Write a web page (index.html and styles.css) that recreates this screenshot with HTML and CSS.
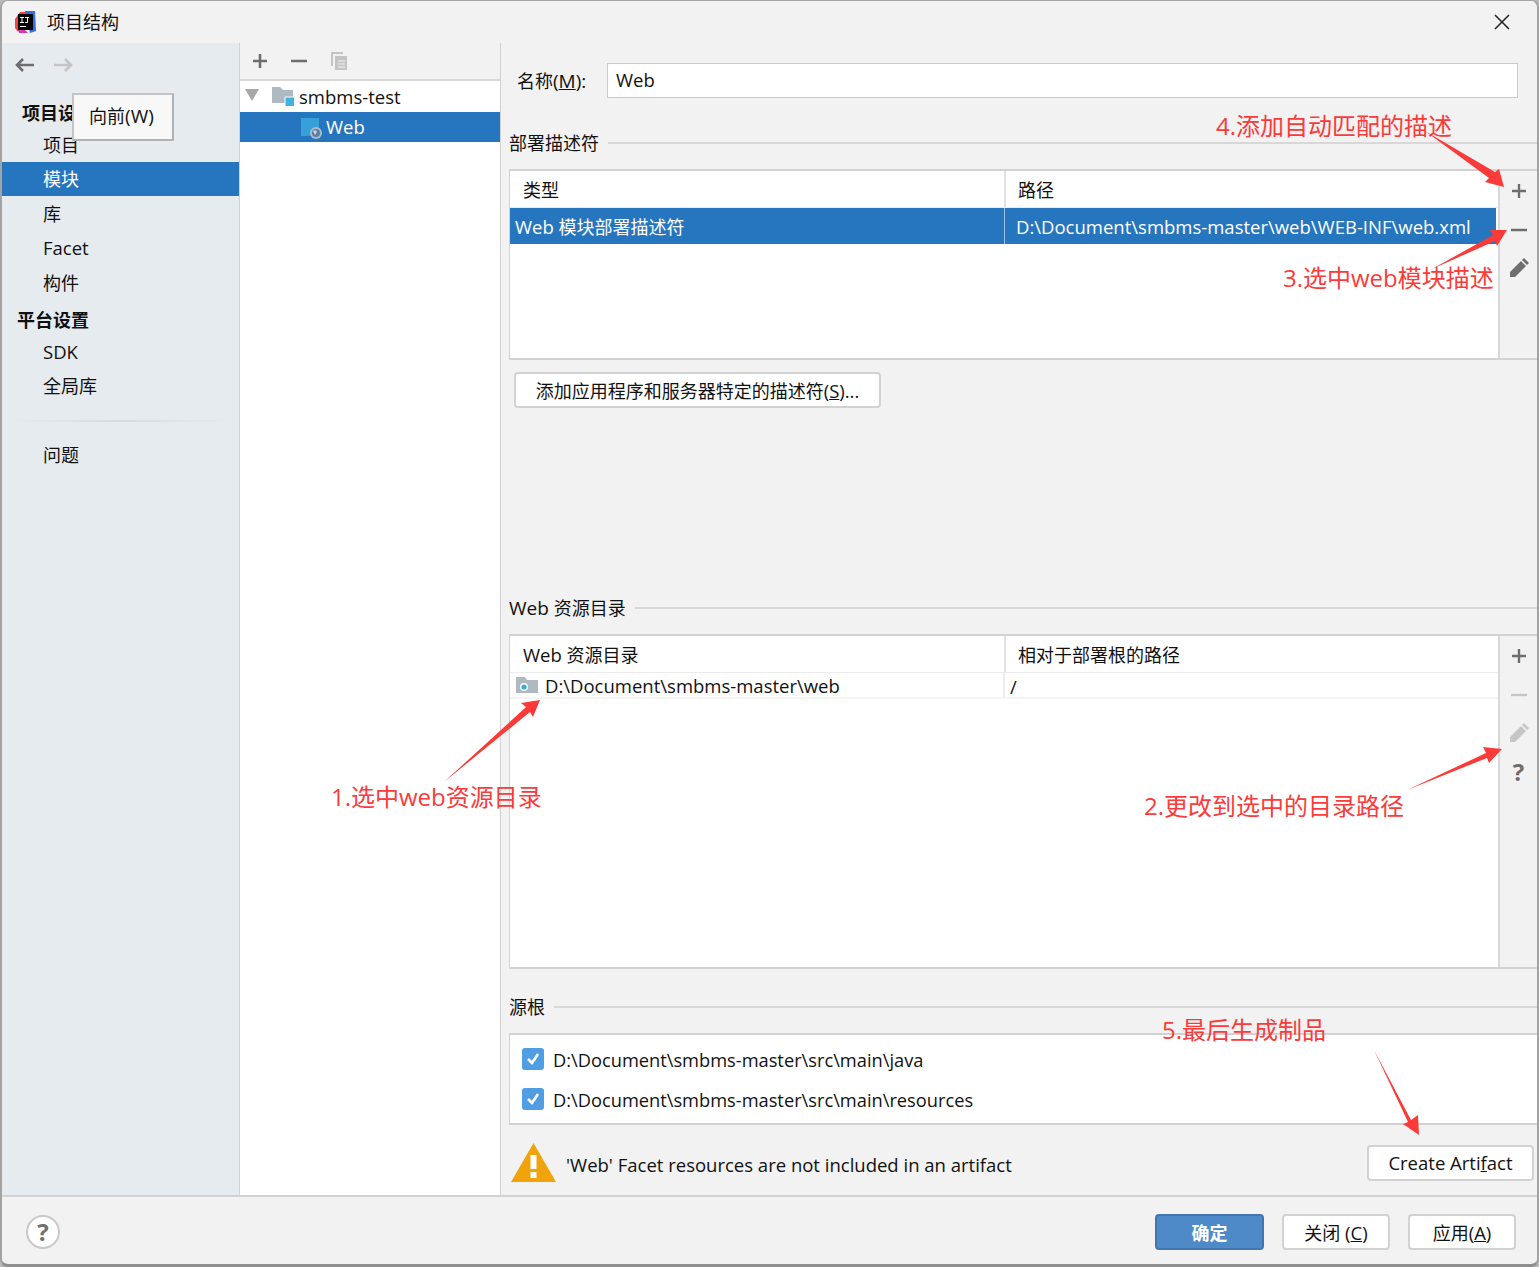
FILE: index.html
```html
<!DOCTYPE html>
<html lang="zh">
<head>
<meta charset="utf-8">
<title>项目结构</title>
<link rel="stylesheet" href="styles.css">
</head>
<body>
<div class="window">
  <header class="titlebar">
    <svg class="applogo" viewBox="0 0 24 24" width="24" height="24">
      <path d="M2 9 7 2h6l1 6-9 14-3-4z" fill="#f9413b"/>
      <path d="M12 1h10l1 20-6 2z" fill="#2f6fe8"/>
      <path d="M4 12l2 11h9z" fill="#d437b0"/>
      <rect x="5" y="4" width="15" height="16" fill="#000"/>
      <path d="M7 7h4v1H9.5v4H11v1H7v-1h1.5V8H7zM12 7h4v1h-1v4q0 1-1 1h-2v-1h2V8h-2z" fill="#fff"/>
      <rect x="7" y="16" width="6" height="1" fill="#fff"/>
    </svg>
    <span class="title">项目结构</span>
    <svg class="close" viewBox="0 0 16 16" width="16" height="16"><path d="M1 1l14 14M15 1 1 15" stroke="#222" stroke-width="1.5" fill="none"/></svg>
  </header>

  <div class="main">
    <nav class="sidebar">
      <div class="navarrows">
        <svg viewBox="0 0 20 16" width="20" height="16"><path d="M20 8H3M9 2 3 8l6 6" stroke="#6e6e6e" stroke-width="2.6" fill="none"/></svg>
        <svg viewBox="0 0 20 16" width="20" height="16"><path d="M0 8h17M11 2l6 6-6 6" stroke="#c4c4c4" stroke-width="2.6" fill="none"/></svg>
      </div>
      <div class="navhead first">项目设置</div>
      <div class="navitem">项目</div>
      <div class="navitem active">模块</div>
      <div class="navitem i3">库</div>
      <div class="navitem lat">Facet</div>
      <div class="navitem i5">构件</div>
      <div class="navhead second">平台设置</div>
      <div class="navitem lat">SDK</div>
      <div class="navitem">全局库</div>
      <div class="navsep"></div>
      <div class="navitem">问题</div>
    </nav>

    <section class="treepane">
      <div class="treetools">
        <svg viewBox="0 0 16 16" width="16" height="16"><path d="M8 1v14M1 8h14" stroke="#6e6e6e" stroke-width="2.6" fill="none"/></svg>
        <svg viewBox="0 0 16 16" width="16" height="16"><path d="M0 8h16" stroke="#6e6e6e" stroke-width="2.6" fill="none"/></svg>
        <svg viewBox="0 0 18 20" width="18" height="20"><path d="M1 1h12v2H3v12H1z" fill="#c4c4c4"/><path d="M5 5h12v14H5z" fill="#c4c4c4"/><path d="M8 10h7M8 13h7M8 16h7" stroke="#f2f2f2" stroke-width="1"/></svg>
      </div>
      <div class="tree">
        <div class="treerow first">
          <svg class="caret" viewBox="0 0 14 12" width="14" height="12"><path d="M0 0h14L7 12z" fill="#a8a8a8"/></svg>
          <svg class="foldericon" viewBox="0 0 22 22" width="22" height="22"><path d="M0 1h8l3 3h10v13H0z" fill="#afb9c2"/><rect x="13" y="11" width="9" height="9" fill="#3fb4e3"/><path d="M13 11h9M13 11v9" stroke="#fff"/></svg>
          <span class="lat">smbms-test</span>
        </div>
        <div class="treerow sel">
          <svg class="webicon" viewBox="0 0 24 22" width="24" height="22"><rect x="0" y="1" width="18" height="18" fill="#38a0d8"/><circle cx="15" cy="16" r="6" fill="#a9bccc"/><circle cx="15" cy="16" r="4" fill="#5b7da0"/><path d="M12 14q3-2 4 1l-2 3z" fill="#c9d6e0"/></svg>
          <span class="lat">Web</span>
        </div>
      </div>
    </section>

    <section class="detail">
      <div class="namerow">
        <label class="namelabel">名称<span class="latwide">(<u>M</u>):</span></label>
        <div class="nameinput lat">Web</div>
      </div>

      <div class="sectionhead s1"><span>部署描述符</span><i></i></div>
      <div class="tablebox tb1">
        <div class="tablemain">
          <div class="thead"><div class="c1">类型</div><div class="c2">路径</div></div>
          <div class="trow selrow"><div class="c1"><span class="lat">Web </span>模块部署描述符</div><div class="c2 lat">D:\Document\smbms-master\web\WEB-INF\web.xml</div></div>
        </div>
        <div class="sidetools">
          <svg viewBox="0 0 16 16" width="16" height="16"><path d="M8 1v14M1 8h14" stroke="#6e6e6e" stroke-width="2.4" fill="none"/></svg>
          <svg viewBox="0 0 16 16" width="16" height="16"><path d="M0 8h16" stroke="#6e6e6e" stroke-width="2.4" fill="none"/></svg>
          <svg viewBox="0 0 20 20" width="20" height="20"><path d="M1 19v-5L12 3l5 5L6 19zM13 2l2-2 5 5-2 2z" fill="#6e6e6e"/></svg>
        </div>
      </div>
      <button class="btn addbtn">添加应用程序和服务器特定的描述符<span class="lat">(<u>S</u>)...</span></button>

      <div class="sectionhead s2"><span><span class="latwide">Web </span>资源目录</span><i></i></div>
      <div class="tablebox tb2">
        <div class="tablemain">
          <div class="thead"><div class="c1"><span class="lat">Web </span>资源目录</div><div class="c2">相对于部署根的路径</div></div>
          <div class="trow plainrow">
            <div class="c1"><svg viewBox="0 0 22 16" width="22" height="16"><path d="M0 0h9l2 3h11v13H0z" fill="#afb9c2"/><circle cx="8" cy="10" r="4" fill="#fff"/><circle cx="8" cy="10" r="2.6" fill="#38a8e0"/></svg><span class="lat">D:\Document\smbms-master\web</span></div>
            <div class="c2 lat">/</div>
          </div>
        </div>
        <div class="sidetools">
          <svg viewBox="0 0 16 16" width="16" height="16"><path d="M8 1v14M1 8h14" stroke="#6e6e6e" stroke-width="2.4" fill="none"/></svg>
          <svg viewBox="0 0 16 16" width="16" height="16"><path d="M0 8h16" stroke="#c6c6c6" stroke-width="2.4" fill="none"/></svg>
          <svg viewBox="0 0 20 20" width="20" height="20"><path d="M1 19v-5L12 3l5 5L6 19zM13 2l2-2 5 5-2 2z" fill="#c6c6c6"/></svg>
          <span class="qmark">?</span>
        </div>
      </div>

      <div class="sectionhead s3"><span>源根</span><i></i></div>
      <div class="rootbox">
        <div class="check"><svg viewBox="0 0 22 22" width="22" height="22"><rect width="22" height="22" rx="3" fill="#4f9ee3"/><path d="M6 11l4 4 6-9" stroke="#fff" stroke-width="2.6" fill="none"/></svg><span>D:\Document\smbms-master\src\main\java</span></div>
        <div class="check"><svg viewBox="0 0 22 22" width="22" height="22"><rect width="22" height="22" rx="3" fill="#4f9ee3"/><path d="M6 11l4 4 6-9" stroke="#fff" stroke-width="2.6" fill="none"/></svg><span>D:\Document\smbms-master\src\main\resources</span></div>
      </div>
      <div class="warnrow">
        <svg viewBox="0 0 45 40" width="45" height="40"><path d="M22.5 0 45 39H0z" fill="#f0a30a"/><rect x="19.500" y="12" width="6" height="14" fill="#fff"/><rect x="19.500" y="29" width="6" height="6" fill="#fff"/></svg>
        <span class="warntext lat">'Web' Facet resources are not included in an artifact</span>
        <button class="btn artifact lat">Create Arti<u>f</u>act</button>
      </div>
    </section>
  </div>

  <footer class="footer">
    <span class="help">?</span>
    <div class="footbtns">
      <button class="btn primary">确定</button>
      <button class="btn foot">关闭 <span class="lat">(<u>C</u>)</span></button>
      <button class="btn foot">应用<span class="lat">(<u>A</u>)</span></button>
    </div>
  </footer>

  <div class="tooltip">向前<span class="latwide">(W)</span></div>
</div>

<svg class="arrows" viewBox="0 0 1539 1267" width="1539" height="1267">
  <g fill="#fb3a3a">
    <path d="M1425 131 1495 172 1499 169 1504 187 1485 182 1489 178z"/>
    <path d="M1432 269 1493 235 1490 230 1507 230 1497 246 1495 241z"/>
    <path d="M444 782 526 707 521 703 540 700 533 717 530 712z"/>
    <path d="M1407 790 1486 753 1483 747 1502 749 1489 763 1487 758z"/>
    <path d="M1374 1050 1411 1120 1418 1115 1419 1135 1403 1124 1408 1122z"/>
  </g>
</svg>
<span class="note n4">4.添加自动匹配的描述</span>
<span class="note n3">3.选中web模块描述</span>
<span class="note n1">1.选中web资源目录</span>
<span class="note n2">2.更改到选中的目录路径</span>
<span class="note n5">5.最后生成制品</span>
</body>
</html>
```

FILE: styles.css
```css
* { box-sizing: border-box; }
html, body { margin: 0; padding: 0; }
body {
  width: 1539px;
  height: 1267px;
  overflow: hidden;
  background: #b9b9b9;
  position: relative;
  font-family: "Open Sans", "Noto Sans CJK SC", sans-serif;
  font-size: 18px;
  color: #111;
}
.lat { font-size: 18.5px; }
.latwide { font-size: 19px; }
.window {
  position: relative;
  width: 1539px;
  height: 1267px;
  background: #f2f2f2;
  border: 2px solid #a3a3a3;
  border-top-width: 1px;
  border-right-width: 2px;
  border-bottom: 3px solid #8f8f8f;
  border-radius: 8px;
  display: flex;
  flex-direction: column;
  overflow: hidden;
}
.titlebar {
  height: 42px;
  flex: none;
  display: flex;
  align-items: center;
  padding-left: 11px;
  padding-right: 27px;
  background: #f2f2f2;
}
.applogo { flex: none; }
.title { margin-left: 10px; line-height: 46px; }
.close { margin-left: auto; }

.main {
  height: 1154px;
  flex: none;
  display: flex;
  border-bottom: 2px solid #d2d2d2;
}

/* sidebar */
.sidebar {
  width: 238px;
  flex: none;
  background: #e6ebf0;
  border-right: 1px solid #d2d2d2;
  display: flex;
  flex-direction: column;
}
.navarrows { height: 44px; display: flex; gap: 20px; padding: 14px 0 0 12px; }
.navhead { font-weight: 700; }
.navhead.first { padding-left: 20px; margin-top: 13px; height: 28px; line-height: 26px; }
.navhead.second { padding-left: 15px; height: 29px; line-height: 29px; margin-top: 6px; }
.navitem { padding-left: 41px; line-height: 34px; height: 34px; }
.navitem.active { background: #2675bf; color: #fff; }
.i3 { margin-top: 1px; }
.i5 { margin-top: 1px; }
.navsep { height: 2px; margin: 17px 8px 16px 10px; background: linear-gradient(90deg, #e6ebf0, #d6dbe0 50%, #e6ebf0); }

/* tree */
.treepane { width: 261px; flex: none; display: flex; flex-direction: column; border-right: 1px solid #d2d2d2; }
.treetools {
  height: 38px;
  flex: none;
  background: #f2f2f2;
  border-bottom: 2px solid #d8d8d8;
  display: flex;
  align-items: center;
  gap: 23px;
  padding: 0 0 0 12px;
}
.tree { flex: 1; background: #fff; }
.treerow { height: 31px; display: flex; align-items: center; position: relative; line-height: 31px; }
.treerow .caret { margin-left: 5px; margin-top: -3px; }
.treerow .foldericon { margin-left: 13px; margin-right: 5px; }
.treerow.sel { background: #2675bf; color: #fff; height: 30px; padding-left: 61px; }
.treerow.sel .lat { margin-top: -2px; }
.webicon { margin-right: 1px; margin-top: 2px; }

/* detail */
.detail { flex: 1; min-width: 0; padding: 0 0 0 8px; display: flex; flex-direction: column; }
.namerow { display: flex; align-items: center; margin-top: 20px; height: 35px; padding-left: 8px; }
.namelabel { width: 90px; flex: none; }
.nameinput {
  width: 911px;
  height: 35px;
  background: #fff;
  border: 1px solid #c9c9c9;
  padding-left: 8px;
  line-height: 31px;
}
.sectionhead { display: flex; align-items: center; gap: 9px; height: 26px; }
.sectionhead span { line-height: 26px; }
.sectionhead i { flex: 1; height: 2px; background: #d8d8d8; }
.s1 { margin-top: 32px; }
.s2 { margin-top: 187px; }
.s3 { margin-top: 25px; }
.tablebox { display: flex; border: 2px solid #d2d2d2; border-left-width: 1px; border-right: 0; background: #fff; }
.tb1 { margin-top: 13px; height: 191px; }
.tb2 { margin-top: 13px; height: 335px; }
.tablemain { width: 988px; flex: none; display: flex; flex-direction: column; }
.thead { display: flex; height: 37px; flex: none; border-bottom: 1px solid #ececec; line-height: 38px; }
.thead .c1 { width: 496px; padding-left: 13px; border-right: 2px solid #e2e2e2; }
.thead .c2 { padding-left: 12px; }
.trow { display: flex; flex: none; }
.selrow { height: 36px; line-height: 37px; background: #2675bf; color: #fff; margin-right: 2px; }
.selrow .c1 { width: 495px; padding-left: 5px; border-right: 1px solid #9cc0e2; }
.selrow .c2 { padding-left: 11px; }
.plainrow { height: 26px; line-height: 28px; border-bottom: 2px solid #f4f4f4; }
.plainrow .c1 { width: 495px; display: flex; align-items: center; padding-left: 6px; border-right: 2px solid #eee; }
.plainrow .c1 svg { margin-right: 7px; }
.plainrow .c1 .lat { padding-top: 2px; }
.plainrow .c2 { padding-left: 5px; }
.sidetools {
  flex: 1;
  background: #f2f2f2;
  border-left: 2px solid #d8d8d8;
  display: flex;
  flex-direction: column;
  align-items: center;
  padding-top: 12px;
  gap: 23px;
}
.sidetools svg:last-of-type { margin-top: -3px; }
.qmark { font-weight: 700; color: #6e6e6e; font-size: 24px; line-height: 24px; margin-top: -6px; }

.btn {
  font: inherit;
  color: #111;
  background: #fff;
  border: 2px solid #d2d2d2;
  border-radius: 4px;
  padding: 0;
  cursor: default;
}
.btn.lat { font-size: 18.5px; }
.addbtn { width: 367px; height: 36px; margin: 12px 0 0 5px; flex: none; }

.rootbox { margin-top: 13px; height: 92px; background: #fff; border: 2px solid #d2d2d2; border-left-width: 1px; border-right: 0; padding-top: 4px; flex: none; font-size: 18.25px; }
.check { display: flex; align-items: center; height: 40px; padding-left: 12px; gap: 9px; }
.warnrow { flex: 1; display: flex; align-items: center; padding: 6px 3px 0 2px; position: relative; }
.warntext { margin-left: 10px; padding-top: 2px; }
.artifact { margin-left: auto; width: 167px; height: 36px; line-height: 30px; }

/* footer */
.footer { flex: 1; display: flex; align-items: center; padding: 3px 21px 0 24px; }
.help {
  width: 34px;
  height: 34px;
  border-radius: 50%;
  background: #fff;
  border: 2px solid #c9c9c9;
  color: #6e6e6e;
  font-weight: 700;
  font-size: 24px;
  line-height: 30px;
  text-align: center;
}
.footbtns { margin-left: auto; display: flex; gap: 18px; }
.foot { width: 108px; height: 36px; }
.primary { width: 109px; height: 36px; background: #4f8ac8; border-color: #4276ad; color: #fff; font-weight: 700; }

/* overlays */
.tooltip {
  position: absolute;
  left: 70px;
  top: 92px;
  width: 102px;
  height: 48px;
  background: #f8f8f8;
  border: 2px solid #b2b2b2;
  border-left-color: #c4c4c4;
  border-top-color: #c4c4c4;
  text-align: center;
  line-height: 42px;
  padding-right: 3px;
}
.arrows { position: absolute; left: 0; top: 0; pointer-events: none; }
.note { position: absolute; color: #fb3a3a; font-size: 24px; line-height: 32px; white-space: nowrap; }
.n4 { left: 1216px; top: 110px; }
.n3 { left: 1283px; top: 262px; }
.n1 { left: 331px; top: 781px; }
.n2 { left: 1144px; top: 790px; }
.n5 { left: 1162px; top: 1014px; }
```
